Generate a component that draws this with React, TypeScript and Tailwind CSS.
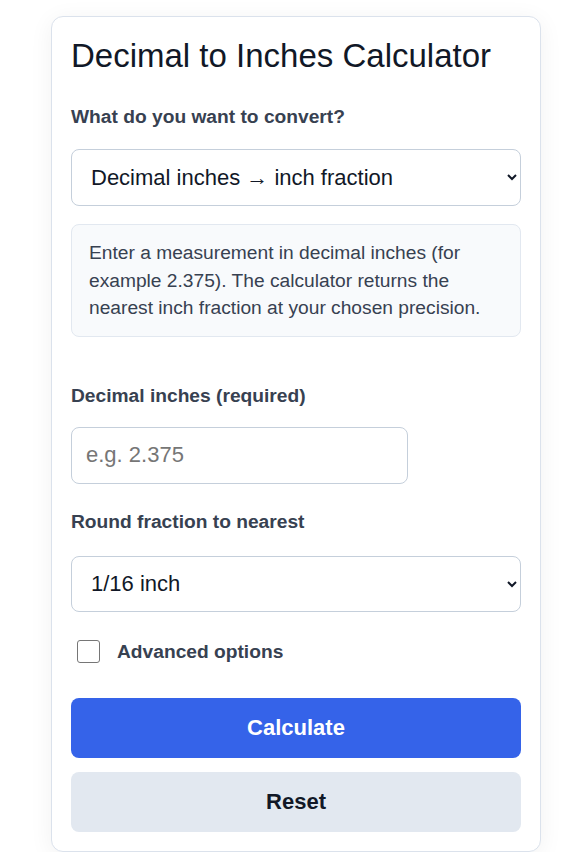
import React, { useState } from "react";

const PRECISIONS = ["1/2 inch", "1/4 inch", "1/8 inch", "1/16 inch", "1/32 inch", "1/64 inch"];

export default function App() {
  const [mode, setMode] = useState("dec2frac");
  const [value, setValue] = useState("");
  const [precision, setPrecision] = useState("1/16 inch");
  const [advanced, setAdvanced] = useState(false);

  const reset = () => {
    setValue("");
    setPrecision("1/16 inch");
    setAdvanced(false);
  };

  return (
    <div className="min-h-screen bg-white font-['Liberation_Sans',Arial,sans-serif] pt-[16px]">
      <div className="ml-[51px] w-[490px] rounded-[12px] border border-[#dbe2ec] bg-white px-[19px] pt-[19px] pb-[19px] shadow-[0_4px_24px_rgba(15,23,42,0.06)]">
        <h1 className="text-[33px] leading-[40px] font-normal text-[#111827]">Decimal to Inches Calculator</h1>

        {/* Mode */}
        <label className="mt-[27px] block text-[19.2px] leading-[28px] font-bold text-[#374151]">
          What do you want to convert?
        </label>
        <select
          value={mode}
          onChange={(e) => setMode(e.target.value)}
          className="mt-[18px] block h-[57px] w-full rounded-lg border border-[#c5cfdb] bg-white pl-[15px] pr-[8px] text-[22px] text-[#111827]"
        >
          <option value="dec2frac">Decimal inches → inch fraction</option>
          <option value="frac2dec">Inch fraction → decimal inches</option>
        </select>

        <div className="mt-[18px] rounded-lg border border-[#e2e8f0] bg-[#f8fafc] px-[17px] py-[14px] text-[19.2px] leading-[27.5px] text-[#374151]">
          Enter a measurement in decimal inches (for example 2.375). The calculator returns the nearest inch fraction at your chosen precision.
        </div>

        {/* Value */}
        <label className="mt-[45px] block text-[19.2px] leading-[28px] font-bold text-[#374151]">
          Decimal inches (required)
        </label>
        <input
          type="text"
          value={value}
          onChange={(e) => setValue(e.target.value)}
          placeholder="e.g. 2.375"
          className="mt-[17px] block h-[57px] w-[337px] rounded-lg border border-[#c5cfdb] bg-white pl-[14px] text-[22px] text-[#111827] placeholder:text-[#767676] outline-none"
        />

        {/* Precision */}
        <label className="mt-[24px] block text-[19.2px] leading-[28px] font-bold text-[#374151]">
          Round fraction to nearest
        </label>
        <select
          value={precision}
          onChange={(e) => setPrecision(e.target.value)}
          className="mt-[20px] block h-[56px] w-full rounded-lg border border-[#c5cfdb] bg-white pl-[15px] pr-[8px] text-[22px] text-[#111827]"
        >
          {PRECISIONS.map((p) => (
            <option key={p} value={p}>{p}</option>
          ))}
        </select>

        {/* Advanced */}
        <label className="mt-[26px] flex cursor-pointer items-center gap-[17px] pl-[6px] select-none">
          <input
            type="checkbox"
            checked={advanced}
            onChange={(e) => setAdvanced(e.target.checked)}
            className="h-[23px] w-[23px] appearance-none rounded-[3px] border-[1.5px] border-[#767676] bg-white checked:bg-[#3563e9] checked:border-[#3563e9]"
          />
          <span className="text-[19.2px] leading-[28px] font-bold text-[#374151]">Advanced options</span>
        </label>

        <button
          type="button"
          className="mt-[32px] flex h-[60px] w-full items-center justify-center rounded-lg bg-[#3563e9] text-[22px] font-bold text-white"
        >
          Calculate
        </button>
        <button
          type="button"
          onClick={reset}
          className="mt-[14px] flex h-[60px] w-full items-center justify-center rounded-lg bg-[#e2e8f0] text-[22px] font-bold text-[#111827]"
        >
          Reset
        </button>
      </div>
    </div>
  );
}
